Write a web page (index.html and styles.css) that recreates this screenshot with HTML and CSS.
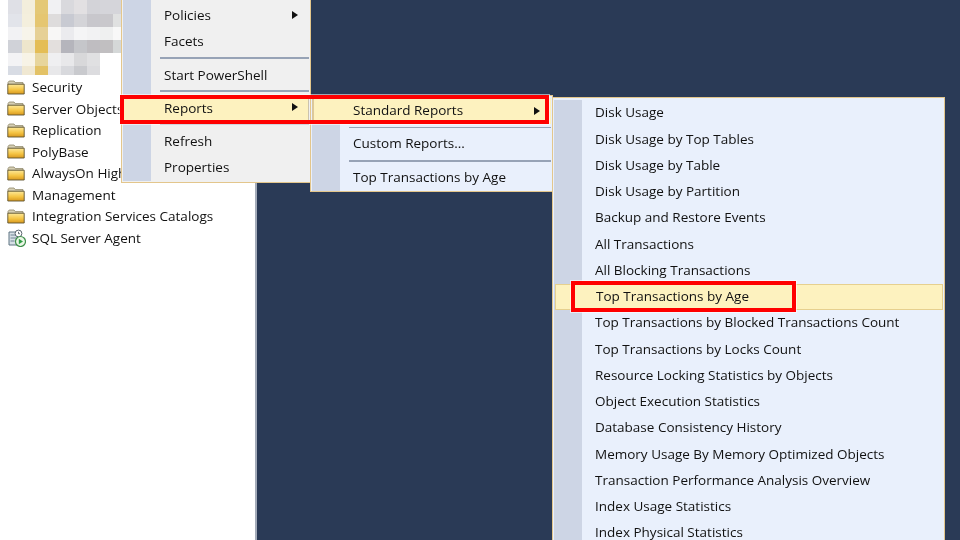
FILE: index.html
```html
<!DOCTYPE html>
<html lang="en">
<head>
<meta charset="utf-8">
<title>Top Transactions by Age</title>
<link rel="stylesheet" href="styles.css">
</head>
<body>
<svg class="defs" width="0" height="0" aria-hidden="true">
  <defs>
    <linearGradient id="fg" x1="0" y1="0" x2="0" y2="1">
      <stop offset="0" stop-color="#fde99a"/>
      <stop offset=".55" stop-color="#f5c545"/>
      <stop offset="1" stop-color="#d8981e"/>
    </linearGradient>
    <symbol id="folder" viewBox="0 0 18 15">
      <path d="M1 2.5 2.2 1H7l1.3 1.6H16v2H1z" fill="#d6cfb4" stroke="#8d8567" stroke-width=".8"/>
      <path d="M.8 4.2h16.4V14H.8z" fill="url(#fg)" stroke="#5f5230" stroke-width=".9"/>
    </symbol>
  </defs>
</svg>
<div class="app">
  <aside class="explorer">
    <svg class="mosaic" width="114" height="75" viewBox="0 0 114 75" aria-hidden="true" shape-rendering="crispEdges">
      <g>
        <rect x="0" y="0" width="14" height="14" fill="#dfe0e6"/><rect x="14" y="0" width="13" height="14" fill="#f3eedc"/><rect x="27" y="0" width="13" height="14" fill="#e4c876"/><rect x="40" y="0" width="13" height="14" fill="#f1f1f3"/><rect x="53" y="0" width="13" height="14" fill="#d9d9dd"/><rect x="66" y="0" width="13" height="14" fill="#e2e0e2"/><rect x="79" y="0" width="13" height="14" fill="#d3d3d8"/><rect x="92" y="0" width="13" height="14" fill="#d5d5da"/><rect x="105" y="0" width="9" height="14" fill="#d5d5da"/>
        <rect x="0" y="14" width="14" height="13" fill="#e2e4ea"/><rect x="14" y="14" width="13" height="13" fill="#f4efdd"/><rect x="27" y="14" width="13" height="13" fill="#e5c671"/><rect x="40" y="14" width="13" height="13" fill="#dedcdc"/><rect x="53" y="14" width="13" height="13" fill="#c8cad2"/><rect x="66" y="14" width="13" height="13" fill="#d4d4d8"/><rect x="79" y="14" width="13" height="13" fill="#c8c7cc"/><rect x="92" y="14" width="13" height="13" fill="#c9c8cc"/><rect x="105" y="14" width="9" height="13" fill="#e0e1e1"/>
        <rect x="0" y="27" width="14" height="13" fill="#f2f2f4"/><rect x="14" y="27" width="13" height="13" fill="#f7f4ea"/><rect x="27" y="27" width="13" height="13" fill="#e6d095"/><rect x="40" y="27" width="13" height="13" fill="#f8f7f6"/><rect x="53" y="27" width="13" height="13" fill="#ebebee"/><rect x="66" y="27" width="13" height="13" fill="#f5f5f6"/><rect x="79" y="27" width="13" height="13" fill="#f2f2f3"/><rect x="92" y="27" width="13" height="13" fill="#eff0f0"/><rect x="105" y="27" width="9" height="13" fill="#f8f8f8"/>
        <rect x="0" y="40" width="14" height="13" fill="#d0d2d8"/><rect x="14" y="40" width="13" height="13" fill="#eee6cc"/><rect x="27" y="40" width="13" height="13" fill="#e4bd55"/><rect x="40" y="40" width="13" height="13" fill="#e3dfdd"/><rect x="53" y="40" width="13" height="13" fill="#b5b5bc"/><rect x="66" y="40" width="13" height="13" fill="#c5c6ca"/><rect x="79" y="40" width="13" height="13" fill="#bfbdc1"/><rect x="92" y="40" width="13" height="13" fill="#c1bfc1"/><rect x="105" y="40" width="9" height="13" fill="#d5d8d8"/>
        <rect x="0" y="53" width="14" height="13" fill="#f3f3f5"/><rect x="14" y="53" width="13" height="13" fill="#f7f3e6"/><rect x="27" y="53" width="13" height="13" fill="#e7d59c"/><rect x="40" y="53" width="13" height="13" fill="#efeff1"/><rect x="53" y="53" width="13" height="13" fill="#e8e8ea"/><rect x="66" y="53" width="13" height="13" fill="#d8d8da"/><rect x="79" y="53" width="13" height="13" fill="#e0e0e2"/>
        <rect x="0" y="66" width="14" height="9" fill="#d8dce4"/><rect x="14" y="66" width="13" height="9" fill="#f0e8d2"/><rect x="27" y="66" width="13" height="9" fill="#e3c266"/><rect x="40" y="66" width="13" height="9" fill="#e8e8ea"/><rect x="53" y="66" width="13" height="9" fill="#d8d9dd"/><rect x="66" y="66" width="13" height="9" fill="#c9cace"/><rect x="79" y="66" width="13" height="9" fill="#dcdcdf"/>
      </g>
    </svg>
    <ul class="tree">
      <li class="node"><svg class="node-icon"><use href="#folder"/></svg>Security</li>
      <li class="node"><svg class="node-icon"><use href="#folder"/></svg>Server Objects</li>
      <li class="node"><svg class="node-icon"><use href="#folder"/></svg>Replication</li>
      <li class="node"><svg class="node-icon"><use href="#folder"/></svg>PolyBase</li>
      <li class="node"><svg class="node-icon"><use href="#folder"/></svg>AlwaysOn High Availability</li>
      <li class="node"><svg class="node-icon"><use href="#folder"/></svg>Management</li>
      <li class="node"><svg class="node-icon"><use href="#folder"/></svg>Integration Services Catalogs</li>
      <li class="node"><svg class="node-icon agent-icon" viewBox="0 0 18 18">
        <path d="M1 3h9v13H1z" fill="#d7dfe6" stroke="#5f7482"/>
        <path d="M2.5 6h6M2.5 9h6M2.5 12h4" stroke="#6f8593"/>
        <circle cx="10.5" cy="4.5" r="3.4" fill="#fff" stroke="#5b6670"/>
        <path d="M10.5 2.8v1.9h1.4" fill="none" stroke="#3b4650" stroke-width=".8"/>
        <circle cx="12.5" cy="12.5" r="5" fill="#eaf6e6" stroke="#3f8f4a" stroke-width="1.2"/>
        <path d="M10.8 9.8v5.4l4.2-2.7z" fill="#2f9e44"/>
      </svg>SQL Server Agent</li>
    </ul>
  </aside>
  <main class="workspace"></main>

  <div class="menu menu-object">
    <ul class="menu-list">
      <li class="item">Policies<i class="arrow"></i></li>
      <li class="item">Facets</li>
      <li class="sep"></li>
      <li class="item">Start PowerShell</li>
      <li class="sep"></li>
      <li class="item hot">Reports<i class="arrow"></i></li>
      <li class="sep"></li>
      <li class="item">Refresh</li>
      <li class="item">Properties</li>
    </ul>
  </div>

  <div class="menu menu-blue menu-reports">
    <ul class="menu-list">
      <li class="item hot">Standard Reports<i class="arrow"></i></li>
      <li class="sep"></li>
      <li class="item">Custom Reports...</li>
      <li class="sep"></li>
      <li class="item">Top Transactions by Age</li>
    </ul>
  </div>

  <div class="menu menu-blue menu-standard">
    <ul class="menu-list">
      <li class="item">Disk Usage</li>
      <li class="item">Disk Usage by Top Tables</li>
      <li class="item">Disk Usage by Table</li>
      <li class="item">Disk Usage by Partition</li>
      <li class="item">Backup and Restore Events</li>
      <li class="item">All Transactions</li>
      <li class="item">All Blocking Transactions</li>
      <li class="item hot boxed">Top Transactions by Age</li>
      <li class="item">Top Transactions by Blocked Transactions Count</li>
      <li class="item">Top Transactions by Locks Count</li>
      <li class="item">Resource Locking Statistics by Objects</li>
      <li class="item">Object Execution Statistics</li>
      <li class="item">Database Consistency History</li>
      <li class="item">Memory Usage By Memory Optimized Objects</li>
      <li class="item">Transaction Performance Analysis Overview</li>
      <li class="item">Index Usage Statistics</li>
      <li class="item">Index Physical Statistics</li>
    </ul>
  </div>

  <div class="callout callout-reports"></div>
  <div class="callout callout-age"></div>
</div>
</body>
</html>
```
FILE: styles.css
```css
* { box-sizing: border-box; }
html, body { margin: 0; padding: 0; height: 100%; }
body { overflow: hidden; font-family: "Open Sans", "Noto Sans", sans-serif; font-size: 13.5px; color: #111; }
ul { list-style: none; margin: 0; padding: 0; }
.defs { position: absolute; }

.app { position: relative; display: flex; width: 960px; height: 540px; overflow: hidden; background: #2a3a56; filter: blur(.3px); }
.explorer { flex: 0 0 256.5px; background: #fff; border-right: 2.5px solid #a3abb9; overflow: hidden; }
.workspace { flex: 1; }

.mosaic { display: block; margin-left: 8px; }
.tree { margin-top: 1.5px; }
.node { display: flex; align-items: center; height: 21.5px; padding-left: 7px; white-space: nowrap; }
.node-icon { flex: none; width: 18px; height: 15px; margin-right: 7px; }
.agent-icon { height: 18px; margin-left: 1px; margin-right: 6px; }

.menu { position: absolute; border: 1px solid #e3c68c; padding: 2px 1px; background: #f0f0f0; }
.menu-blue { background: #e9f0fc; }
.menu-list { background: linear-gradient(90deg, #cdd5e5 28px, transparent 28px); }
.menu-object { left: 121px; top: -5px; width: 190px; height: 188px; }
.menu-object .menu-list { padding-top: 4px; }
.menu-object .hot { box-shadow: inset -1px 0 #cbc3ad; }
.menu-object .item { padding-bottom: 0; }
.menu-reports { left: 310px; top: 95px; width: 243px; height: 97px; }
.menu-reports .hot { box-shadow: inset 2px 0 #dcc89a; }
.menu-reports .item { padding-bottom: 2px; }
.menu-standard { left: 552px; top: 97px; width: 393px; height: 460px; }

.item { position: relative; display: flex; align-items: center; height: 26.25px; padding: 0 0 1.5px 41px; white-space: nowrap; }
.hot { background: #fdf2bf; }
.boxed { margin: 0 0 0 1px; padding-left: 40px; border: 1.5px solid #e6d08f; }
.arrow { position: absolute; right: 11px; top: 8.5px; width: 0; height: 0; border-style: solid; border-width: 4.5px 0 4.5px 6px; border-color: transparent transparent transparent #111; }
.sep { height: 7px; margin-left: 37px; padding-top: 2.5px; }
.sep::before { content: ""; display: block; height: 1.5px; background: #97a3b6; }

.callout { position: absolute; border: 4px solid #ff0000; box-shadow: 0 0 0 1px rgba(255,255,255,.55); }
.callout-reports { left: 120px; top: 94.5px; width: 429px; height: 29px; }
.callout-age { left: 571px; top: 281px; width: 225px; height: 31px; }
```
